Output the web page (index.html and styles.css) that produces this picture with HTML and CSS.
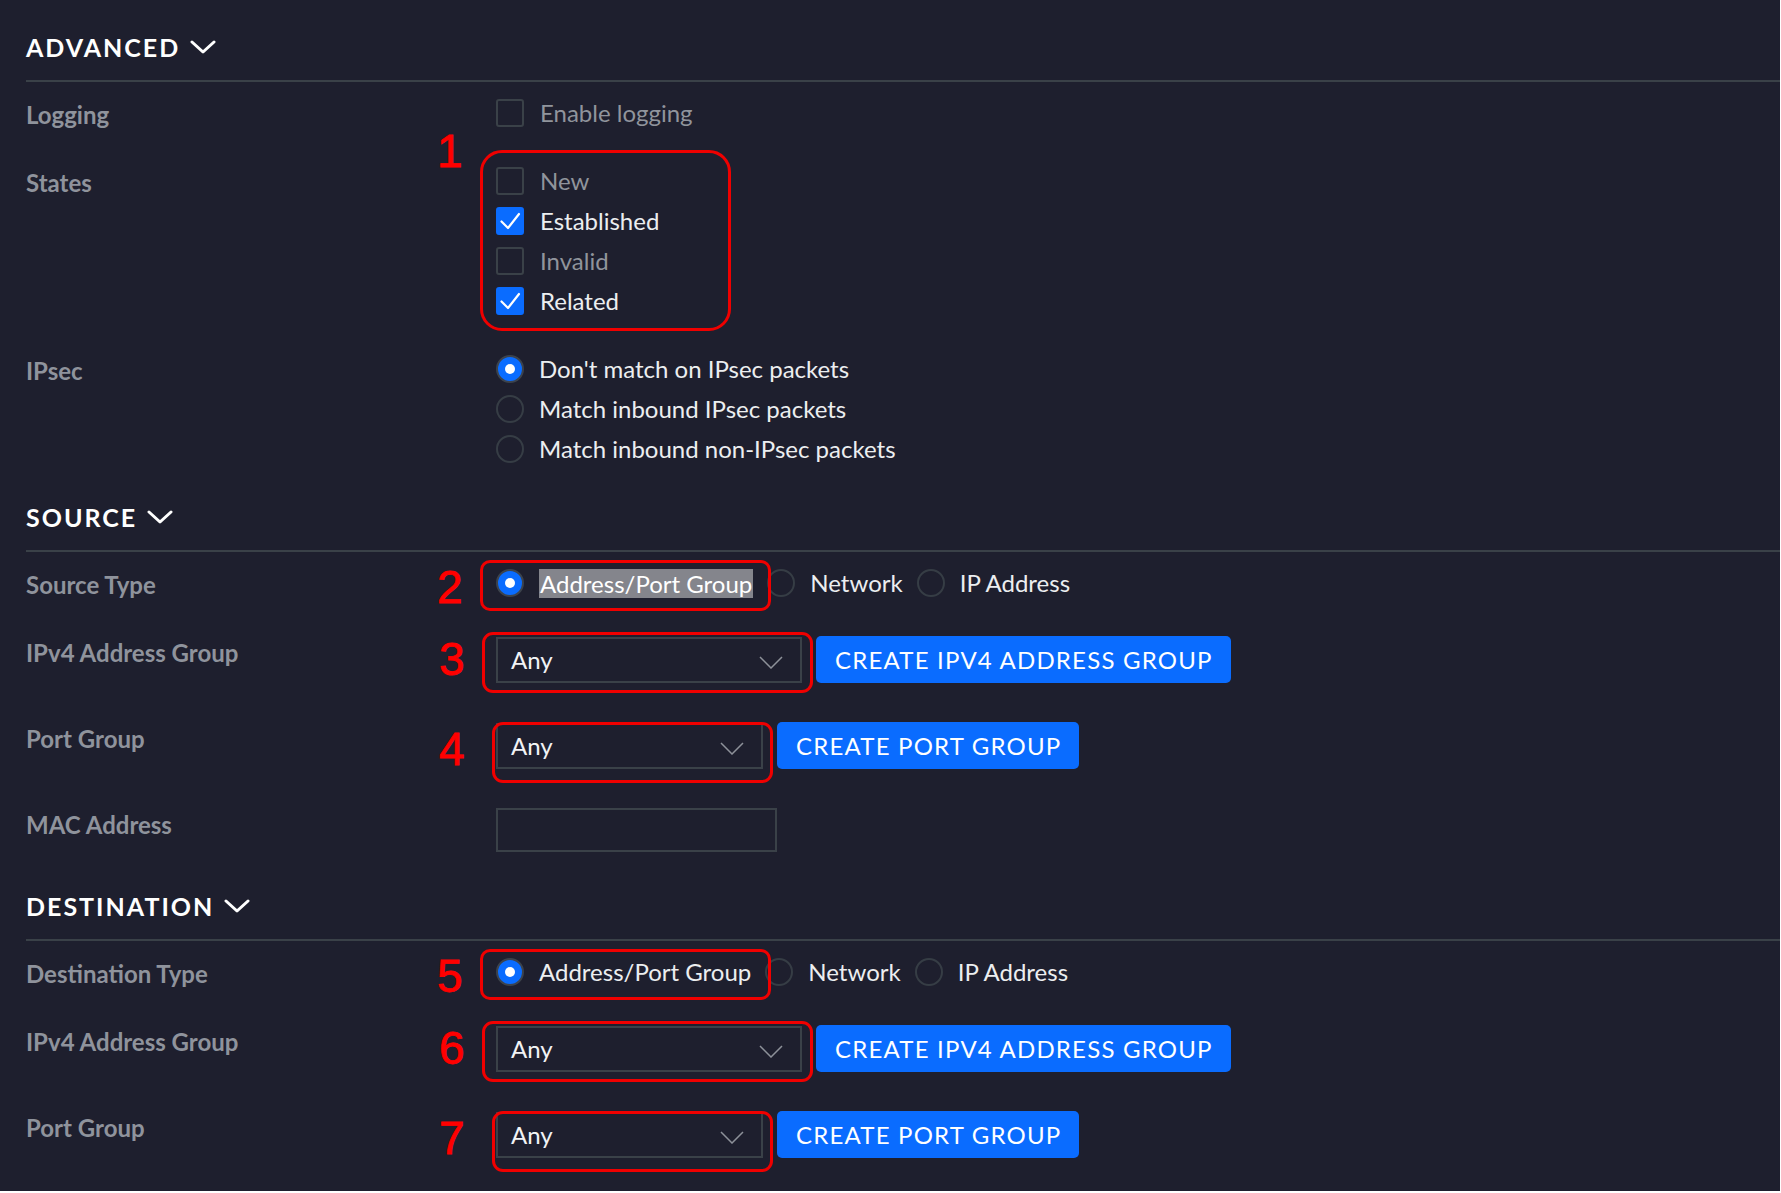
FILE: index.html
```html
<!DOCTYPE html>
<html lang="en">
<head>
<meta charset="utf-8">
<title>Firewall rule settings</title>
<link rel="stylesheet" href="styles.css">
</head>
<body>
<div class="page">

  <section class="section first">
    <h2 class="section-title">ADVANCED
      <svg class="title-chev" width="26" height="14" viewBox="0 0 26 14"><polyline points="2,2 13,12 24,2"/></svg>
    </h2>
    <div class="rule"></div>
    <div class="form">
      <div class="label">Logging</div>
      <div class="control">
        <label class="check"><span class="cbox"></span><span class="opt dim">Enable logging</span></label>
      </div>

      <div class="label">States</div>
      <div class="control">
        <div class="stack anno">
          <span class="anno-box b1"></span><span class="anno-num n1">1</span>
          <label class="check"><span class="cbox"></span><span class="opt dim">New</span></label>
          <label class="check"><span class="cbox on"><svg width="28" height="28" viewBox="0 0 28 28"><polyline points="5.5,14.5 12,21 23,7"/></svg></span><span class="opt">Established</span></label>
          <label class="check"><span class="cbox"></span><span class="opt dim">Invalid</span></label>
          <label class="check"><span class="cbox on"><svg width="28" height="28" viewBox="0 0 28 28"><polyline points="5.5,14.5 12,21 23,7"/></svg></span><span class="opt">Related</span></label>
        </div>
      </div>

      <div class="label">IPsec</div>
      <div class="control">
        <div class="stack">
          <label class="radio"><span class="rdot on"></span><span class="opt">Don't match on IPsec packets</span></label>
          <label class="radio"><span class="rdot"></span><span class="opt">Match inbound IPsec packets</span></label>
          <label class="radio"><span class="rdot"></span><span class="opt">Match inbound non-IPsec packets</span></label>
        </div>
      </div>
    </div>
  </section>

  <section class="section">
    <h2 class="section-title">SOURCE
      <svg class="title-chev" width="26" height="14" viewBox="0 0 26 14"><polyline points="2,2 13,12 24,2"/></svg>
    </h2>
    <div class="rule"></div>
    <div class="form">
      <div class="label">Source Type</div>
      <div class="control">
        <div class="radio-row">
          <label class="radio anno">
            <span class="anno-box b2"></span><span class="anno-num n2">2</span>
            <span class="rdot on"></span><span class="opt selected">Address/Port Group</span>
          </label>
          <label class="radio"><span class="rdot"></span><span class="opt">Network</span></label>
          <label class="radio"><span class="rdot"></span><span class="opt">IP Address</span></label>
        </div>
      </div>

      <div class="label">IPv4 Address Group</div>
      <div class="control inline">
        <div class="select wide anno">
          <span class="anno-box b3"></span><span class="anno-num n3">3</span>
          <span class="select-value">Any</span>
          <svg class="select-chev" width="24" height="13" viewBox="0 0 24 13"><polyline points="1,1 12,12 23,1"/></svg>
        </div>
        <button class="btn" type="button">CREATE IPV4 ADDRESS GROUP</button>
      </div>

      <div class="label">Port Group</div>
      <div class="control inline">
        <div class="select narrow anno">
          <span class="anno-box b4"></span><span class="anno-num n4">4</span>
          <span class="select-value">Any</span>
          <svg class="select-chev" width="24" height="13" viewBox="0 0 24 13"><polyline points="1,1 12,12 23,1"/></svg>
        </div>
        <button class="btn" type="button">CREATE PORT GROUP</button>
      </div>

      <div class="label">MAC Address</div>
      <div class="control">
        <div class="text-input"></div>
      </div>
    </div>
  </section>

  <section class="section">
    <h2 class="section-title">DESTINATION
      <svg class="title-chev" width="26" height="14" viewBox="0 0 26 14"><polyline points="2,2 13,12 24,2"/></svg>
    </h2>
    <div class="rule"></div>
    <div class="form">
      <div class="label">Destination Type</div>
      <div class="control">
        <div class="radio-row">
          <label class="radio anno">
            <span class="anno-box b2"></span><span class="anno-num n2">5</span>
            <span class="rdot on"></span><span class="opt plain">Address/Port Group</span>
          </label>
          <label class="radio"><span class="rdot"></span><span class="opt">Network</span></label>
          <label class="radio"><span class="rdot"></span><span class="opt">IP Address</span></label>
        </div>
      </div>

      <div class="label">IPv4 Address Group</div>
      <div class="control inline">
        <div class="select wide anno">
          <span class="anno-box b3"></span><span class="anno-num n3">6</span>
          <span class="select-value">Any</span>
          <svg class="select-chev" width="24" height="13" viewBox="0 0 24 13"><polyline points="1,1 12,12 23,1"/></svg>
        </div>
        <button class="btn" type="button">CREATE IPV4 ADDRESS GROUP</button>
      </div>

      <div class="label">Port Group</div>
      <div class="control inline">
        <div class="select narrow anno">
          <span class="anno-box b4"></span><span class="anno-num n4">7</span>
          <span class="select-value">Any</span>
          <svg class="select-chev" width="24" height="13" viewBox="0 0 24 13"><polyline points="1,1 12,12 23,1"/></svg>
        </div>
        <button class="btn" type="button">CREATE PORT GROUP</button>
      </div>
    </div>
  </section>

</div>
</body>
</html>
```

FILE: styles.css
```css
html {
  background: #ffffff;
}

body {
  margin: 0;
  font-family: Lato, "Open Sans", "Liberation Sans", sans-serif;
  color: #eceef0;
}

.page {
  width: 1780px;
  height: 1191px;
  box-sizing: border-box;
  background: #1e1f2e;
  padding-left: 26px;
  overflow: hidden;
}

.section {
  margin-top: 39px;
}

.section.first {
  margin-top: 0;
  padding-top: 32px;
}

.section-title {
  display: flex;
  align-items: center;
  gap: 10px;
  margin: 0 0 18px;
  height: 30px;
  font-size: 25px;
  line-height: 30px;
  font-weight: 700;
  letter-spacing: 2px;
  color: #ffffff;
}

.title-chev polyline {
  fill: none;
  stroke: #ffffff;
  stroke-width: 3;
  stroke-linecap: round;
  stroke-linejoin: round;
}

.rule {
  height: 2px;
  background: #3a4148;
  margin-bottom: 17px;
}

.form {
  display: grid;
  grid-template-columns: 470px auto;
  row-gap: 40px;
  align-items: start;
}

.label {
  font-size: 24px;
  line-height: 28px;
  padding-top: 2px;
  margin-bottom: -2px;
  font-weight: 700;
  color: #8f939c;
}

.control {
  font-size: 24px;
  line-height: 28px;
}

.control.inline {
  display: flex;
  align-items: flex-start;
  gap: 14px;
  height: 46px;
}

.stack {
  display: flex;
  flex-direction: column;
  align-items: flex-start;
  gap: 12px;
}

.check,
.radio {
  display: flex;
  align-items: center;
  gap: 15px;
  height: 28px;
}

.opt {
  color: #eceef0;
  white-space: nowrap;
}

.opt.dim {
  color: #90949c;
}

.opt.selected {
  background: #84858c;
  color: #ffffff;
  line-height: 29px;
  padding: 0 1px;
}

.cbox {
  width: 28px;
  height: 28px;
  box-sizing: border-box;
  border: 2px solid #3a4148;
  border-radius: 3px;
  flex: none;
  display: block;
}

.cbox.on {
  background: #0a6cff;
  border-color: #0a6cff;
}

.cbox.on svg {
  display: block;
  margin: -2px;
}

.cbox.on polyline {
  fill: none;
  stroke: #ffffff;
  stroke-width: 2.2;
  stroke-linecap: round;
  stroke-linejoin: round;
}

.check .opt {
  margin-left: 1px;
}

.rdot {
  width: 28px;
  height: 28px;
  box-sizing: border-box;
  border: 2px solid #363d45;
  border-radius: 50%;
  flex: none;
  display: flex;
  align-items: center;
  justify-content: center;
}

.rdot.on {
  background: #0a6cff;
  border-color: #3c434d;
}

.rdot.on::after {
  content: "";
  width: 10px;
  height: 10px;
  border-radius: 50%;
  background: #ffffff;
}

.radio-row {
  display: flex;
  align-items: center;
  gap: 14px;
}

.select {
  height: 46px;
  box-sizing: border-box;
  border: 2px solid #3a4148;
  display: flex;
  align-items: center;
  justify-content: space-between;
  padding: 0 17px 0 13px;
  color: #f2f3f5;
}

.select.wide {
  width: 306px;
}

.select.narrow {
  width: 267px;
}

.select-chev {
  margin-top: 5px;
}

.select-chev polyline {
  fill: none;
  stroke: #8d9199;
  stroke-width: 1.5;
}

.btn {
  height: 47px;
  margin-top: -1px;
  border: 0;
  border-radius: 5px;
  background: #0a6cff;
  color: #ffffff;
  font-family: Lato, "Open Sans", "Liberation Sans", sans-serif;
  font-size: 24px;
  letter-spacing: 1.2px;
  padding: 0 18px 0 19px;
  white-space: nowrap;
}

.text-input {
  width: 281px;
  height: 44px;
  box-sizing: border-box;
  border: 2px solid #3a4148;
  margin-top: -1px;
}

/* red annotation overlays */
.anno {
  position: relative;
}

.anno-box {
  position: absolute;
  box-sizing: border-box;
  border: 3px solid #f00000;
  pointer-events: none;
}

.anno-num {
  position: absolute;
  left: -59px;
  font-family: "Liberation Sans", Arial, sans-serif;
  font-size: 46px;
  line-height: 46px;
  color: #ff0000;
  -webkit-text-stroke: 0.8px #ff0000;
}

.b1 {
  left: -16px;
  top: -17px;
  width: 251px;
  height: 181px;
  border-radius: 22px;
}

.n1 {
  top: -39px;
}

.b2 {
  left: -16px;
  top: -9px;
  width: 291px;
  height: 51px;
  border-radius: 10px;
}

.n2 {
  top: -5px;
}

.b3 {
  left: -16px;
  top: -7px;
  width: 331px;
  height: 61px;
  border-radius: 11px;
}

.n3 {
  top: -3px;
}

.b4 {
  left: -6px;
  top: -3px;
  width: 281px;
  height: 61px;
  border-radius: 11px;
}

.n4 {
  top: 1px;
}
```
